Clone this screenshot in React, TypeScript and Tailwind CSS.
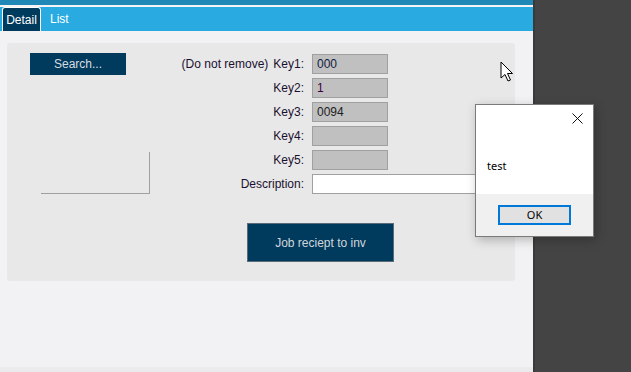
import React from 'react'

const keyRows = [
  { label: 'Key1:', value: '000', color: 'text-[#102040]' },
  { label: 'Key2:', value: '1', color: 'text-[#400040]' },
  { label: 'Key3:', value: '0094', color: 'text-[#202020]' },
  { label: 'Key4:', value: '', color: '' },
  { label: 'Key5:', value: '', color: '' },
]

const App: React.FC = () => {
  return (
    <div className="relative flex h-[372px] w-[631px] overflow-hidden font-['Liberation_Sans',Arial,sans-serif]">
      {/* Main page */}
      <div className="flex w-[533px] flex-col bg-[#f2f2f4]">
        <div className="h-[5px] bg-[#1f88b6]" />
        <div className="h-[2px] bg-[#f4f4f4]" />
        {/* Tabs */}
        <div className="flex h-[24px] items-end bg-[#29abe2] pl-[2px]">
          <div className="flex h-[24px] w-[39px] items-center justify-center rounded-t-[3px] border border-b-0 border-white bg-[#003a5c] text-[12px] text-white">
            Detail
          </div>
          <div className="flex h-[24px] items-center pl-[9px] text-[12px] text-white">List</div>
        </div>

        {/* Panel */}
        <div className="px-[7px] pt-[12px]">
          <div className="flex h-[238px] w-[508px] rounded-[3px] bg-[#e8e8e8]">
            {/* Left column */}
            <div className="flex w-[143px] flex-col pl-[23px] pt-[10px]">
              <button className="h-[22px] w-[96px] bg-[#003a5c] text-[12px] text-[#d8dde2]">Search...</button>
              <div className="ml-[11px] mt-[77px] h-[42px] w-[109px] border-b border-r border-[#a0a0a0]" />
            </div>

            {/* Form */}
            <div className="flex flex-1 flex-col pt-[11px]">
              <div className="flex flex-col gap-[4px]">
                {keyRows.map((row, i) => (
                  <div key={row.label} className="flex h-[20px] items-center">
                    <div className="w-[162px] pr-[8px] text-right text-[12px] text-[#1a1030]">
                      {i === 0 && <span className="mr-[5px]">(Do not remove)</span>}
                      {row.label}
                    </div>
                    <div className={`flex h-[20px] w-[76px] items-center border border-[#a0a0a0] bg-[#c0c0c0] pl-[4px] text-[12px] ${row.color}`}>
                      {row.value}
                    </div>
                  </div>
                ))}
                <div className="flex h-[20px] items-center">
                  <div className="w-[162px] pr-[8px] text-right text-[12px] text-[#1a1030]">Description:</div>
                  <div className="h-[20px] w-[180px] border border-[#a0a0a0] bg-white" />
                </div>
              </div>
              <div className="pl-[97px] pt-[29px]">
                <button className="h-[39px] w-[147px] border border-[#5a6a78] bg-[#003a5c] text-[12px] text-[#d0d6dc]">
                  Job reciept to inv
                </button>
              </div>
            </div>
          </div>
        </div>
        <div className="flex-1" />
        <div className="h-[5px] bg-[#ebebed]" />
      </div>

      {/* Dark area on right */}
      <div className="flex-1 border-l-2 border-[#3a3a3a] bg-[#444444]" />

      {/* Cursor */}
      <svg className="absolute left-[500px] top-[61px]" width="14" height="22" viewBox="0 0 14 22">
        <path d="M1 1 L1 17 L5 13.5 L8 20 L10.5 19 L7.5 12.5 L12.5 12.5 Z" fill="white" stroke="black" strokeWidth="1" strokeLinejoin="miter" />
      </svg>

      {/* Dialog */}
      <div className="absolute left-[475px] top-[104px] flex h-[133px] w-[119px] flex-col border border-[#7a7a7a] bg-white font-['Noto_Sans',sans-serif] shadow-[2px_3px_10px_rgba(0,0,0,0.25)]">
        <div className="flex h-[89px] flex-col bg-white">
          <div className="flex justify-end pr-[10px] pt-[8px]">
            <svg width="11" height="11" viewBox="0 0 11 11">
              <path d="M0.5 0.5 L10.5 10.5 M10.5 0.5 L0.5 10.5" stroke="#111" strokeWidth="1" />
            </svg>
          </div>
          <div className="pl-[11px] pt-[34px] text-[11px] text-black">test</div>
        </div>
        <div className="flex flex-1 items-start justify-center bg-[#f0f0f0] pt-[11px]">
          <div className="flex h-[20px] w-[73px] items-center justify-center border-2 border-[#0078d7] bg-[#e1e1e1] text-[11px] text-black">
            OK
          </div>
        </div>
      </div>
    </div>
  )
}

export default App
